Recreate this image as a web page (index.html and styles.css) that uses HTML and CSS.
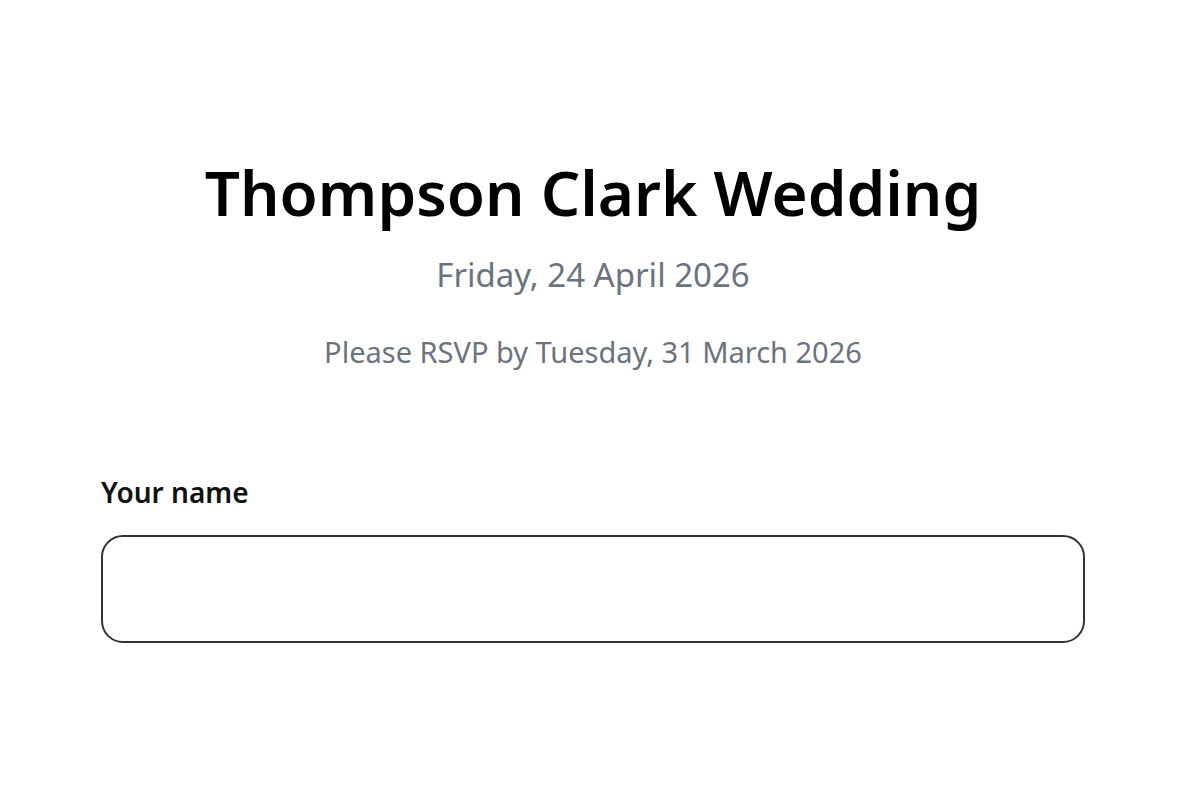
FILE: index.html
```html
<!DOCTYPE html>
<html lang="en">
<head>
    <meta charset="UTF-8">
    <meta name="viewport" content="width=device-width, initial-scale=1.0">
    <title>Thompson Clark Wedding - RSVP</title>
    <link rel="stylesheet" href="styles.css">
</head>
<body>
    <div class="container">
        <header class="event-header">
            <h1>Thompson Clark Wedding</h1>
            <p class="event-date">Friday, 24 April 2026</p>
            <p class="rsvp-deadline">Please RSVP by Tuesday, 31 March 2026</p>
        </header>

        <!-- Guest form -->
        <form class="rsvp-form">
            <label for="guest-name">Your name</label>
            <input type="text" id="guest-name" name="guest-name">
        </form>
    </div>
</body>
</html>
```

FILE: styles.css
```css
body {
    font-family: "Noto Sans", "Open Sans", sans-serif;
    background: #fff;
    color: #000;
    margin: 0;
    padding: 0;
}
.container {
    width: 984px;
    margin: 0 0 0 101px;
    padding-top: 150px;
}
.event-header {
    text-align: center;
}
h1 {
    font-size: 62px;
    font-weight: 600;
    margin: 0;
    line-height: 84px;
}
.event-date {
    font-size: 33px;
    color: #6b7280;
    margin: 21px 0 0;
    line-height: 40px;
}
.rsvp-deadline {
    font-size: 29px;
    color: #6b7280;
    margin: 39px 0 0;
    line-height: 36px;
}
.rsvp-form {
    margin-top: 104px;
}
label {
    display: block;
    font-size: 28px;
    line-height: 36px;
    font-weight: 600;
    color: #111;
    margin-bottom: 25px;
}
input {
    display: block;
    width: 100%;
    height: 108px;
    box-sizing: border-box;
    border: 2px solid #333;
    border-radius: 22px;
    padding: 0 24px;
    font-size: 24px;
    font-family: inherit;
    outline: none;
}
```
